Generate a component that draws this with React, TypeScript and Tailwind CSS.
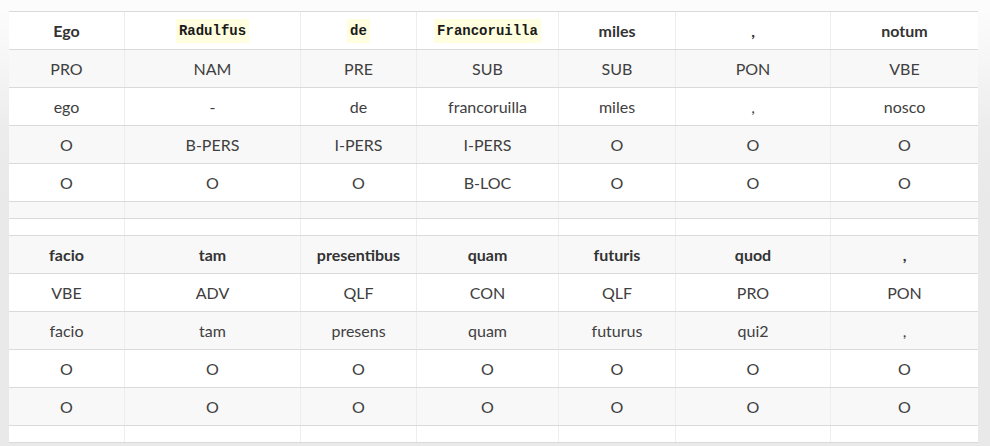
import React from "react";

type Cell = { t: string; code?: boolean };

const cols = ["w-[116px]", "w-[176px]", "w-[116px]", "w-[142px]", "w-[117px]", "w-[155px]", "w-[147px]"];

const h1: Cell[] = [
  { t: "Ego" },
  { t: "Radulfus", code: true },
  { t: "de", code: true },
  { t: "Francoruilla", code: true },
  { t: "miles" },
  { t: "," },
  { t: "notum" },
];
const b1 = [
  ["PRO", "NAM", "PRE", "SUB", "SUB", "PON", "VBE"],
  ["ego", "-", "de", "francoruilla", "miles", ",", "nosco"],
  ["O", "B-PERS", "I-PERS", "I-PERS", "O", "O", "O"],
  ["O", "O", "O", "B-LOC", "O", "O", "O"],
];
const h2: Cell[] = ["facio", "tam", "presentibus", "quam", "futuris", "quod", ","].map((t) => ({ t }));
const b2 = [
  ["VBE", "ADV", "QLF", "CON", "QLF", "PRO", "PON"],
  ["facio", "tam", "presens", "quam", "futurus", "qui2", ","],
  ["O", "O", "O", "O", "O", "O", "O"],
  ["O", "O", "O", "O", "O", "O", "O"],
];

type Row = { kind: "head"; cells: Cell[] } | { kind: "body"; cells: string[] } | { kind: "spacer" };

const rows: Row[] = [
  { kind: "head", cells: h1 },
  ...b1.map((c) => ({ kind: "body" as const, cells: c })),
  { kind: "spacer" },
  { kind: "spacer" },
  { kind: "head", cells: h2 },
  ...b2.map((c) => ({ kind: "body" as const, cells: c })),
  { kind: "spacer" },
];

function RowView({ row, idx }: { row: Row; idx: number }) {
  const bg = idx % 2 === 1 ? "bg-[#f8f8f8]" : "bg-white";
  const h = row.kind === "spacer" ? "h-[16px]" : "h-[37px]";
  return (
    <div className={`flex ${bg} border-b border-[#dadada]`}>
      {cols.map((w, i) => {
        const last = i === cols.length - 1;
        let content: React.ReactNode = null;
        if (row.kind === "head") {
          const c = row.cells[i];
          content = c.code ? (
            <span
              className="inline-block bg-[#ffffe0] px-[3px] py-[4px] text-[14px] leading-[16px] font-bold text-[#1a1a1a]"
              style={{ fontFamily: '"Liberation Mono", monospace' }}
            >
              {c.t}
            </span>
          ) : (
            <span className="font-bold text-[#333]">{c.t}</span>
          );
        } else if (row.kind === "body") {
          content = <span className="text-[#404040]">{row.cells[i]}</span>;
        }
        return (
          <div
            key={i}
            className={`${w} ${h} shrink-0 flex items-center justify-center ${last ? "" : "border-r border-[#ededed]"}`}
          >
            {content}
          </div>
        );
      })}
    </div>
  );
}

export default function App() {
  return (
    <div
      className="w-[990px] h-[446px] overflow-hidden bg-[linear-gradient(to_bottom,#fdfdfd_0px,#f6f6f6_60px,#ececec_130px,#e9e9e9_200px)]"
      style={{ fontFamily: 'Lato, "Noto Sans", sans-serif' }}
    >
      <div className="pt-[11px] pl-[9px]">
        <div className="w-[969px] border-t border-[#dadada] text-[16px] leading-[20px]">
          {rows.map((r, i) => (
            <RowView key={i} row={r} idx={i} />
          ))}
        </div>
      </div>
    </div>
  );
}
